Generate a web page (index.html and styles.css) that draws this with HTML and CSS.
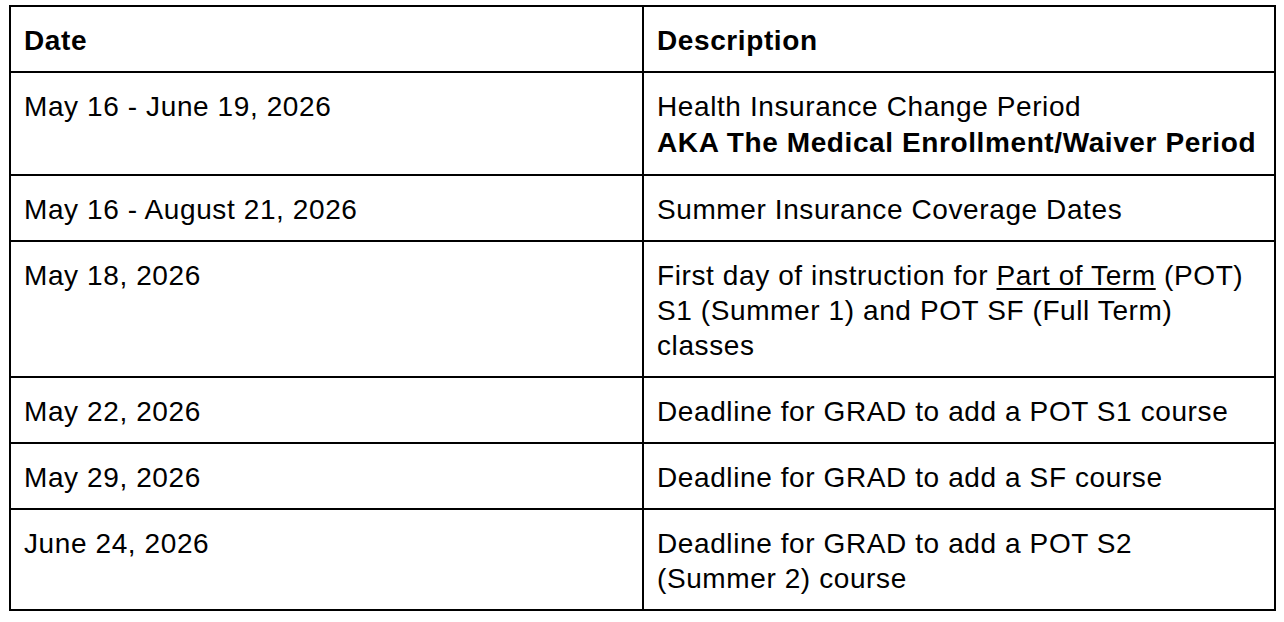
FILE: index.html
```html
<!DOCTYPE html>
<html>
<head>
<meta charset="utf-8">
<link rel="stylesheet" href="styles.css">
</head>
<body>
<table class="dates">
  <colgroup><col class="c1"><col class="c2"></colgroup>
  <tr class="head"><th>Date</th><th>Description</th></tr>
  <tr><td>May 16 - June 19, 2026</td><td>Health Insurance Change Period<strong class="aka">AKA The Medical Enrollment/Waiver Period</strong></td></tr>
  <tr><td>May 16 - August 21, 2026</td><td>Summer Insurance Coverage Dates</td></tr>
  <tr><td>May 18, 2026</td><td>First day of instruction for <u>Part of Term</u> (POT) S1 (Summer 1) and POT SF (Full Term) classes</td></tr>
  <tr><td>May 22, 2026</td><td>Deadline for GRAD to add a POT S1 course</td></tr>
  <tr><td>May 29, 2026</td><td>Deadline for GRAD to add a SF course</td></tr>
  <tr><td>June 24, 2026</td><td>Deadline for GRAD to add a POT S2 (Summer 2) course</td></tr>
</table>
</body>
</html>
```
FILE: styles.css
```css
html, body {
  margin: 0;
  background: #fff;
}
body {
  padding: 5px 9px;
  font-family: "Liberation Sans", Arial, sans-serif;
  color: #000;
}
.dates {
  border-collapse: collapse;
  width: 1265px;
  table-layout: fixed;
  font-size: 28px;
  line-height: 35px;
  letter-spacing: 0.6px;
}
.c1 { width: 633px; }
.c2 { width: 632px; }
.dates th,
.dates td {
  border: 2px solid #000;
  padding: 16px 15px 13px 13px;
  text-align: left;
  vertical-align: top;
}
.dates th { font-weight: bold; }
.aka {
  display: block;
  font-weight: bold;
  line-height: 37px;
  white-space: nowrap;
}
.dates u { text-decoration: underline; text-underline-offset: 3px; }
```
